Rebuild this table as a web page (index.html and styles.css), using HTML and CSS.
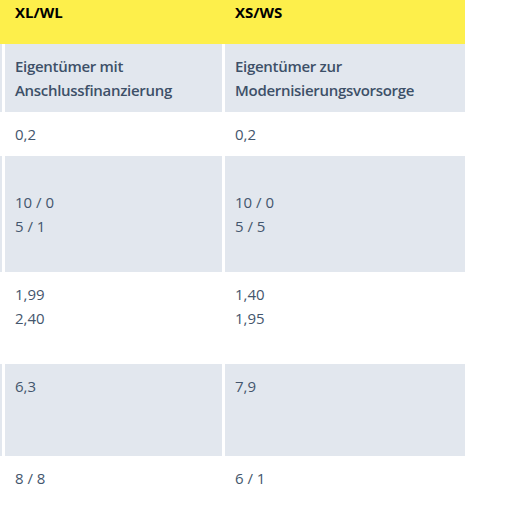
FILE: index.html
```html
<!DOCTYPE html>
<html lang="de">
<head>
<meta charset="utf-8">
<title>Tarifvergleich</title>
<link rel="stylesheet" href="styles.css">
</head>
<body>
<div class="scroller">
  <table class="compare">
    <colgroup>
      <col class="col-cut">
      <col class="col-a">
      <col class="col-b">
    </colgroup>
    <thead>
      <tr class="head">
        <th class="cut"></th>
        <th>XL/WL</th>
        <th>XS/WS</th>
      </tr>
    </thead>
    <tbody>
      <tr class="shade sub">
        <td class="cut"></td>
        <td>Eigentümer mit<br>Anschlussfinanzierung</td>
        <td>Eigentümer zur<br>Modernisierungsvorsorge</td>
      </tr>
      <tr class="r1">
        <td class="cut"></td>
        <td>0,2</td>
        <td>0,2</td>
      </tr>
      <tr class="shade r4">
        <td class="cut"></td>
        <td>10 / 0<br>5 / 1</td>
        <td>10 / 0<br>5 / 5</td>
      </tr>
      <tr class="r3">
        <td class="cut"></td>
        <td>1,99<br>2,40</td>
        <td>1,40<br>1,95</td>
      </tr>
      <tr class="shade r3">
        <td class="cut"></td>
        <td>6,3</td>
        <td>7,9</td>
      </tr>
      <tr class="r3">
        <td class="cut"></td>
        <td>8 / 8</td>
        <td>6 / 1</td>
      </tr>
    </tbody>
  </table>
</div>
</body>
</html>
```
FILE: styles.css
```css
html, body {
  margin: 0;
  padding: 0;
  background: #ffffff;
}

body {
  font-family: "Open Sans", "Noto Sans", sans-serif;
  color: #44566d;
  font-size: 15px;
  line-height: 24px;
}

.scroller {
  width: 465px;
  overflow: hidden;
}

.compare {
  border-collapse: separate;
  border-spacing: 0;
  table-layout: fixed;
  width: 465px;
}

.col-cut { width: 2px; }
.col-a { width: 220px; }
.col-b { width: 243px; }

.compare th,
.compare td {
  padding: 10px;
  border-left: 3px solid #ffffff;
  text-align: left;
  vertical-align: top;
}

.compare .cut {
  padding: 0;
  border-left: 0;
}

.head th {
  background: #fdef4b;
  border-left-color: #fdef4b;
  color: #000000;
  font-weight: 700;
  font-size: 15px;
  padding-top: 0;
  padding-bottom: 20px;
}

.shade td {
  background: #e2e7ee;
}

.sub td {
  font-weight: 600;
  color: #3d5068;
  letter-spacing: -0.3px;
}

.r1 td { height: 24px; }
.r3 td { height: 72px; }
.r4 td { height: 96px; vertical-align: middle; }
.r4 td.cut { vertical-align: top; }
```
